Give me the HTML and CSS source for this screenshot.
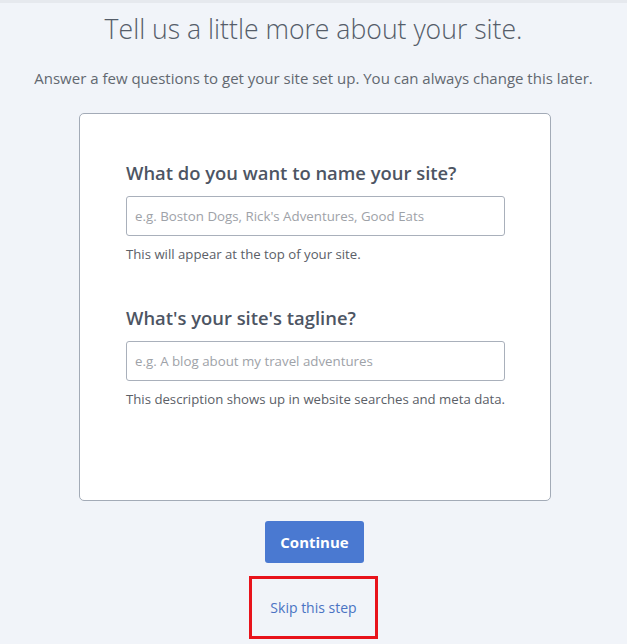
FILE: index.html
```html
<!DOCTYPE html>
<html lang="en">
<head>
  <meta charset="UTF-8" />
  <meta name="viewport" content="width=device-width, initial-scale=1.0"/>
  <title>Site Setup</title>
  <link rel="stylesheet" href="styles.css">
</head>
<body>

  <div class="top-strip"></div>

  <h1>Tell us a little more about your site.</h1>
  <p class="intro">Answer a few questions to get your site set up. You can always change this later.</p>

  <!-- Site details card -->
  <form class="card">
    <div class="field">
      <label for="site_name">What do you want to name your site?</label>
      <input type="text" id="site_name" name="site_name" placeholder="e.g. Boston Dogs, Rick's Adventures, Good Eats">
      <p class="help">This will appear at the top of your site.</p>
    </div>

    <div class="field">
      <label for="tagline">What's your site's tagline?</label>
      <input type="text" id="tagline" name="tagline" placeholder="e.g. A blog about my travel adventures">
      <p class="help">This description shows up in website searches and meta data.</p>
    </div>
  </form>

  <div class="actions">
    <button type="button" class="btn-continue">Continue</button>
    <div class="skip-box">
      <a href="#" class="skip">Skip this step</a>
    </div>
  </div>

</body>
</html>
```

FILE: styles.css
```css
body {
  font-family: "Open Sans", Arial, sans-serif;
  background-color: #f1f4f9;
  margin: 0;
  color: #58606b;
}

.top-strip {
  height: 3px;
  background-color: #e6e9ee;
}

h1 {
  margin: 9px 0 0;
  font-size: 26.6px;
  font-weight: 300;
  line-height: 34px;
  text-align: center;
  color: #555d69;
}

.intro {
  margin: 22px 0 0;
  font-size: 15px;
  line-height: 20px;
  text-align: center;
  color: #626870;
}

.card {
  box-sizing: border-box;
  width: 472px;
  margin: 25px 0 0 79px;
  padding: 46px 46px 92px;
  background-color: #fff;
  border: 1px solid #a3abb7;
  border-radius: 5px;
}

.field + .field {
  margin-top: 42px;
}

.field label {
  display: block;
  font-size: 18.4px;
  font-weight: 600;
  line-height: 26px;
  color: #4d5563;
}

.field input {
  display: block;
  box-sizing: border-box;
  width: 379px;
  height: 40px;
  margin-top: 10px;
  padding: 0 8px;
  font-family: inherit;
  font-size: 13.3px;
  border: 1px solid #a9b0bb;
  border-radius: 3px;
}

.field input::placeholder {
  color: #9ea2a8;
}

.help {
  margin: 10px 0 0;
  font-size: 13.2px;
  line-height: 17px;
  white-space: nowrap;
  color: #5b6067;
}

.actions {
  display: flex;
  flex-direction: column;
  align-items: center;
  margin-top: 20px;
}

.btn-continue {
  width: 99px;
  height: 42px;
  margin-left: 2px;
  background-color: #4a79d1;
  color: white;
  font-family: inherit;
  font-size: 15px;
  font-weight: 700;
  border: none;
  border-radius: 3px;
  cursor: pointer;
}

.skip-box {
  display: flex;
  align-items: center;
  justify-content: center;
  box-sizing: border-box;
  width: 129px;
  height: 63px;
  margin-top: 13px;
  border: 3px solid #e8131b;
}

.skip {
  font-size: 14px;
  color: #4a73c3;
  text-decoration: none;
}
```
